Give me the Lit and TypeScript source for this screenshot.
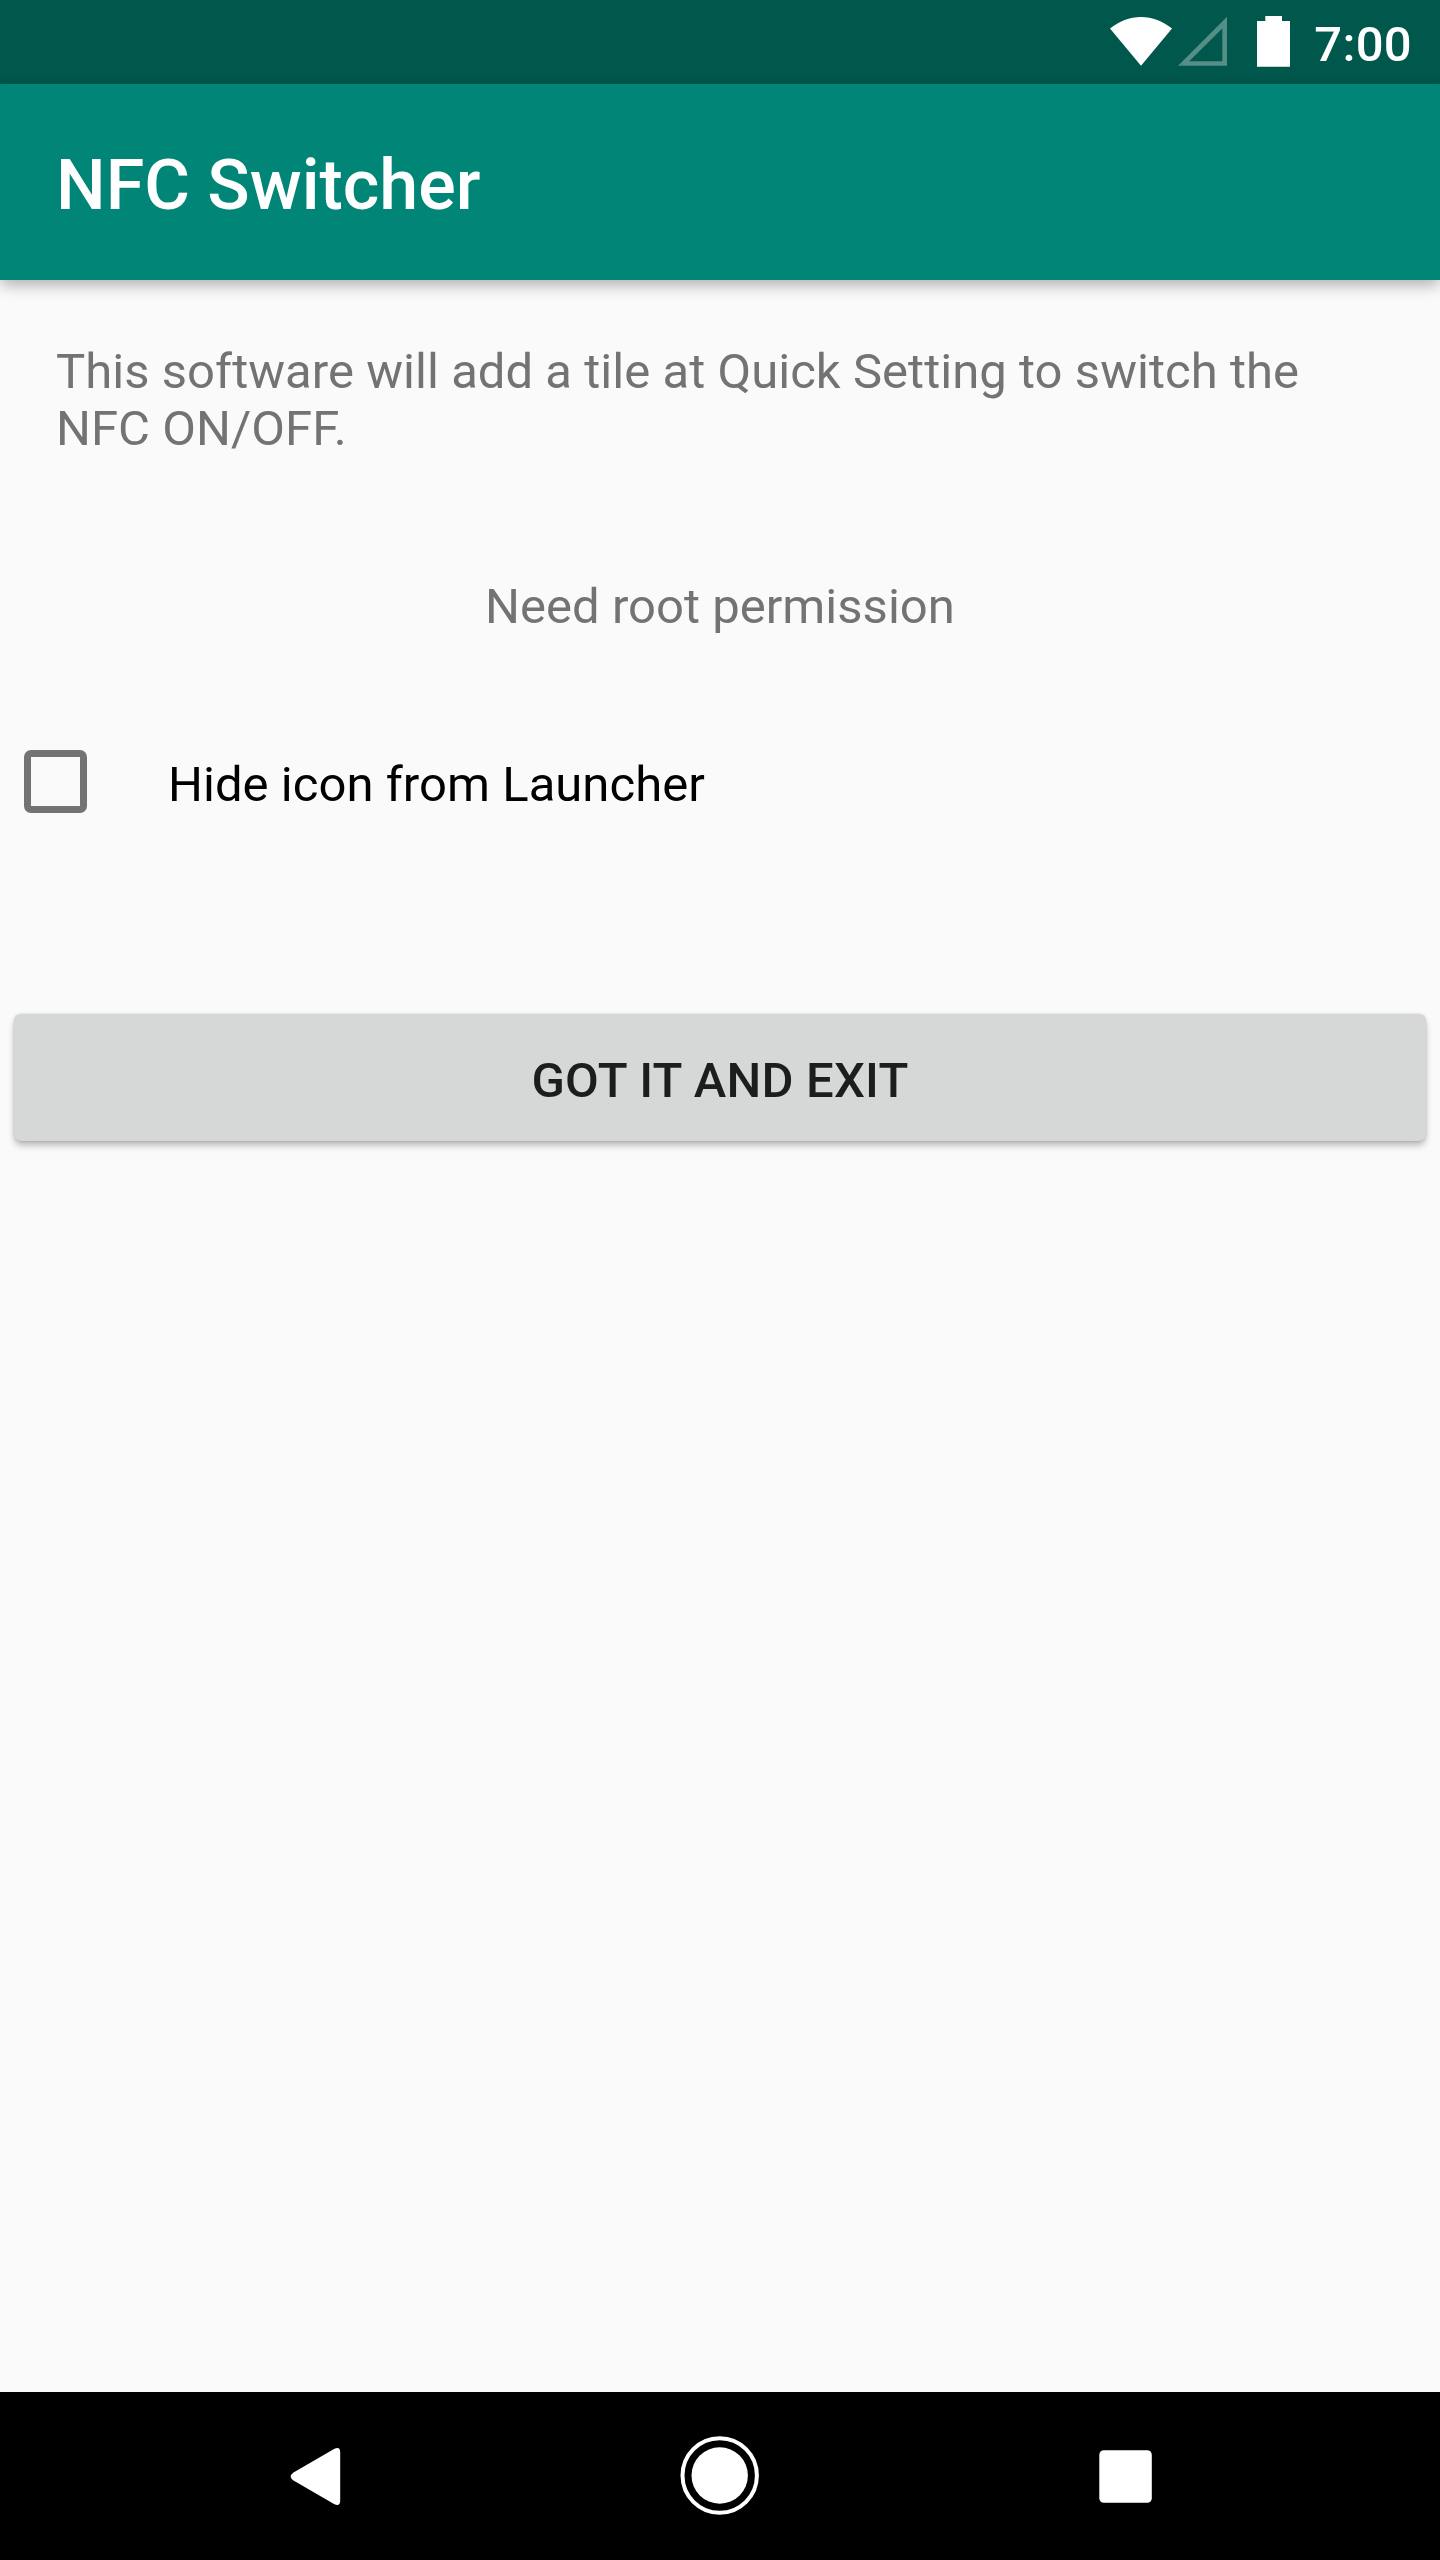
import { LitElement, html, css } from "lit";
import { customElement, state } from "lit/decorators.js";

@customElement("status-bar")
class StatusBar extends LitElement {
  static styles = css`
    :host { display: block; }
    .bar {
      box-sizing: border-box;
      height: 84px;
      padding: 16px 28px 0 0;
      display: flex;
      justify-content: flex-end;
      align-items: flex-start;
      background: #00574b;
      color: #fff;
    }
    .icon { display: block; flex: none; }
    .wifi { margin-right: 6px; }
    .signal { margin-right: 30px; }
    .battery { margin-right: 24px; }
    .clock {
      width: 98px;
      text-align: right;
      font: 500 49px/57px Roboto, sans-serif;
      letter-spacing: 0.3px;
      white-space: nowrap;
    }
  `;

  render() {
    return html`
      <div class="bar">
        <svg class="icon wifi" width="62" height="50" viewBox="0 0 62 50">
          <path fill="#fff" d="M31 49.8 0 12.6C9 5.4 19.500 1 31 1s22 4.400 31 11.600z" />
        </svg>
        <svg class="icon signal" width="49" height="50" viewBox="0 0 49 50">
          <path fill="#fff" fill-opacity=".33" fill-rule="evenodd" d="M0 49.800 49 .8v49zM11.200 45.300H44.300V12.500z" />
        </svg>
        <svg class="icon battery" width="33" height="51" viewBox="0 0 33 51">
          <path fill="#fff" d="M8.300 0H25v5h8v45.800H0V5h8.300z" />
        </svg>
        <div class="clock">7:00</div>
      </div>
    `;
  }
}

@customElement("nav-bar")
class NavBar extends LitElement {
  static styles = css`
    :host { display: block; }
    .bar {
      box-sizing: border-box;
      height: 168px;
      padding: 0 191px;
      display: grid;
      grid-template-columns: 250px 1fr 250px;
      align-items: center;
      justify-items: center;
      background: #000;
    }
    .icon { display: block; }
  `;

  render() {
    return html`
      <div class="bar">
        <svg class="icon" width="84" height="84" viewBox="0 0 84 84">
          <path fill="#fff" d="M19.500 38.600 60 15Q66.200 12 66.200 18.500V66.500Q66.200 73 60 70L19.500 46.600Q14 42.600 19.500 38.600z" />
        </svg>
        <svg class="icon" width="84" height="84" viewBox="0 0 84 84">
          <circle cx="41.700" cy="41.500" r="37.200" fill="none" stroke="#fff" stroke-width="4" />
          <circle cx="41.700" cy="41.500" r="28.200" fill="#fff" />
        </svg>
        <svg class="icon" width="84" height="84" viewBox="0 0 84 84">
          <rect x="17.300" y="16.200" width="52.500" height="52.500" rx="4.500" fill="#fff" />
        </svg>
      </div>
    `;
  }
}

@customElement("app-root")
class AppRoot extends LitElement {
  static styles = css`
    :host { display: block; }
    .screen {
      display: flex;
      flex-direction: column;
      width: 1440px;
      height: 2560px;
      overflow: hidden;
      background: #fafafa;
      font: 400 49px/57px Roboto, sans-serif;
      color: #737373;
    }
    .toolbar {
      box-sizing: border-box;
      height: 196px;
      padding: 60px 56px 0;
      background: #008577;
      box-shadow: 0 6px 14px -1px rgba(0, 0, 0, 0.3);
    }
    .title { margin: 0; font: 500 70px/82px Roboto, sans-serif; color: #fff; }
    .content { flex: 1; display: flex; flex-direction: column; }
    .about { margin: 63px 56px 0; letter-spacing: 0.04px; }
    .note { margin: 121px 0 0; text-align: center; letter-spacing: 0.02px; }
    .option {
      display: flex;
      align-items: center;
      gap: 81px;
      height: 63px;
      margin: 115px 0 0 24px;
      color: #000;
    }
    .box { width: 63px; height: 63px; display: block; }
    .label { padding-top: 6px; letter-spacing: 0.04px; }
    .exit {
      height: 127px;
      margin: 201px 14px 0;
      padding: 6px 0 0;
      border: 0;
      border-radius: 7px;
      background: #d6d7d7;
      box-shadow: 0 5px 7px -1px rgba(0, 0, 0, 0.28), 0 0 3px rgba(0, 0, 0, 0.16);
      font: 500 49px/57px Roboto, sans-serif;
      letter-spacing: 0.2px;
      color: #1c1d1d;
    }
  `;

  @state() private checked = false;

  private toggle() {
    this.checked = !this.checked;
  }

  render() {
    return html`
      <div class="screen">
        <status-bar></status-bar>
        <header class="toolbar"><h1 class="title">NFC Switcher</h1></header>
        <main class="content">
          <p class="about">This software will add a tile at Quick Setting to switch the NFC ON/OFF.</p>
          <p class="note">Need root permission</p>
          <div class="option" role="checkbox" aria-checked=${this.checked} @click=${this.toggle}>
            <svg class="box" viewBox="0 0 63 63">
              <rect x="3.500" y="3.500" width="56" height="56" rx="3.500" fill=${this.checked ? "#008577" : "none"} stroke="#737373" stroke-width="7" />
            </svg>
            <span class="label">Hide icon from Launcher</span>
          </div>
          <button class="exit">GOT IT AND EXIT</button>
        </main>
        <nav-bar></nav-bar>
      </div>
    `;
  }
}
